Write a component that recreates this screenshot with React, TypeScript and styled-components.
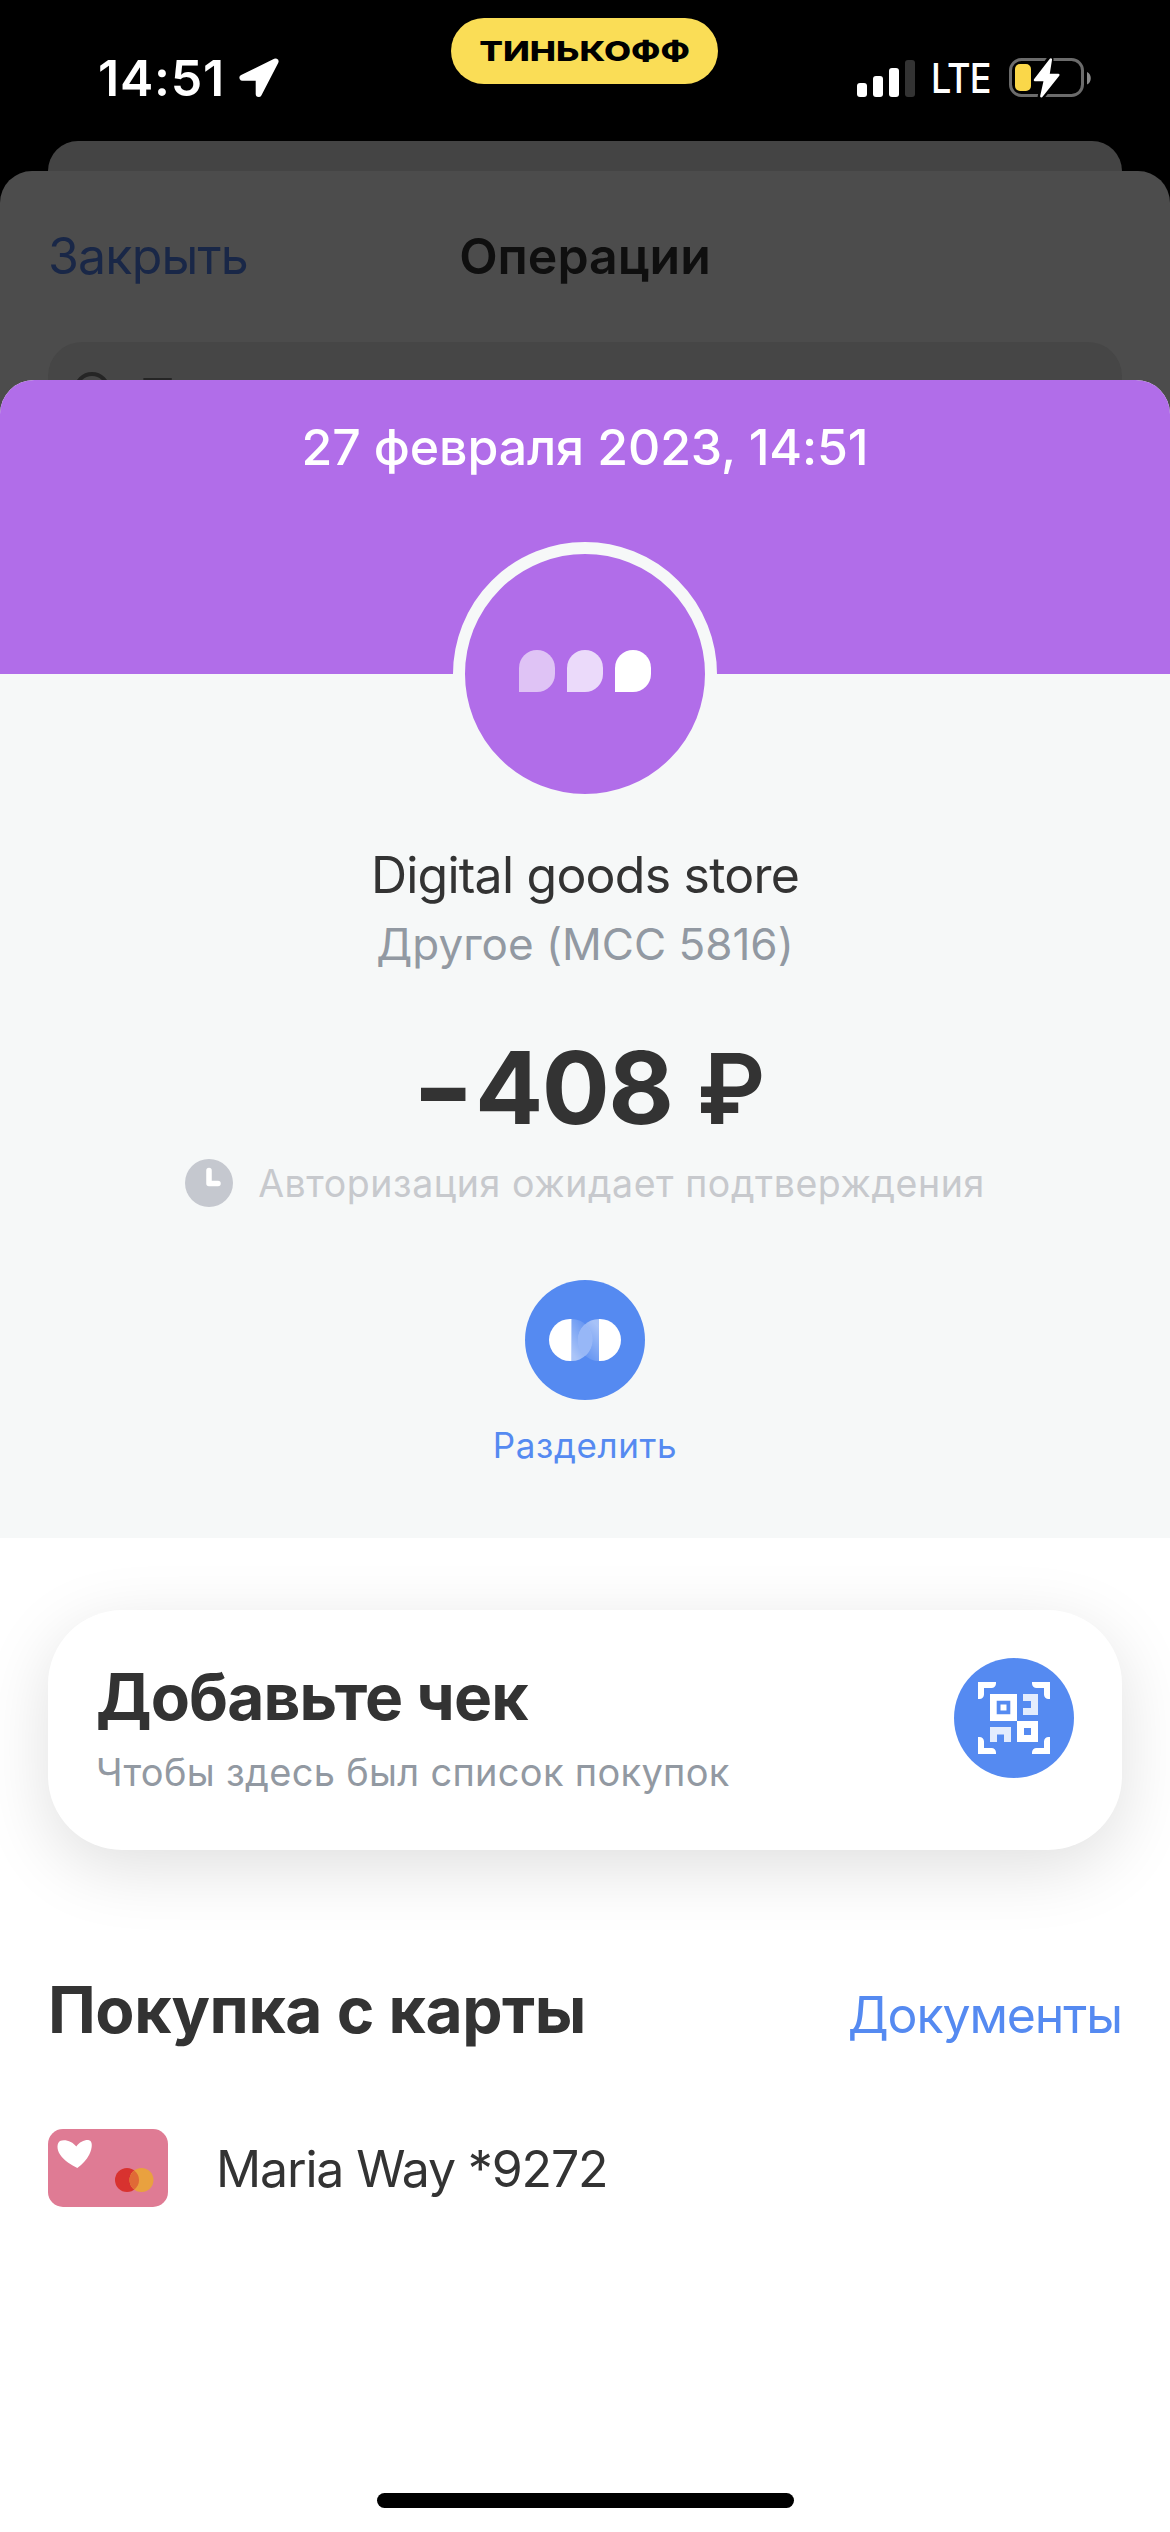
import React from "react";
import styled, { createGlobalStyle } from "styled-components";

const GlobalStyle = createGlobalStyle`
  * { box-sizing: border-box; }
  body {
    margin: 0;
    background: #000;
    font-family: Inter, "Noto Sans", sans-serif;
    -webkit-font-smoothing: antialiased;
  }
`;

const Screen = styled.div`
  width: 1170px;
  height: 2532px;
  background: #000;
  display: flex;
  flex-direction: column;
  overflow: hidden;
`;

const Label = styled.span<{
  $size: number;
  $line: number;
  $color: string;
  $weight?: number;
  $track?: number;
}>`
  display: block;
  margin: 0;
  white-space: nowrap;
  font-size: ${(p) => p.$size}px;
  line-height: ${(p) => p.$line}px;
  color: ${(p) => p.$color};
  font-weight: ${(p) => p.$weight ?? 400};
  letter-spacing: ${(p) => p.$track ?? 0}px;
`;

/* Status bar */

const StatusBar = styled.header`
  height: 141px;
  flex: none;
  display: grid;
  grid-template-columns: 451px 267px 1fr;
`;

const StatusLeft = styled.div`
  display: flex;
  align-items: center;
  gap: 11px;
  height: 60px;
  margin-top: 48px;
  padding-left: 98px;
`;

const BrandPill = styled.div`
  height: 66px;
  margin-top: 18px;
  border-radius: 33px;
  background: #fadd56;
  display: flex;
  align-items: center;
  justify-content: center;
`;

const BrandName = styled(Label)`
  transform: scaleX(1.275);
`;

const StatusRight = styled.div`
  display: flex;
  align-items: center;
  justify-content: flex-end;
  height: 60px;
  margin-top: 48px;
  padding-right: 78px;
`;

const Signal = styled.div`
  display: flex;
  align-items: flex-end;
  gap: 6px;
  height: 37px;
  margin-right: 16px;
`;

const SignalBar = styled.i<{ $height: number; $off?: boolean }>`
  width: 10px;
  height: ${(p) => p.$height}px;
  border-radius: 3px;
  background: ${(p) => (p.$off ? "#333" : "#fff")};
`;

const Network = styled(Label)`
  width: 64px;
  margin-right: 14px;
  transform: scaleX(0.88);
  transform-origin: left;
`;

/* Sheets underneath */

const BackSheet = styled.div`
  flex: none;
  height: 30px;
  margin: 0 48px;
  border-radius: 30px 30px 0 0;
  background: #444;
`;

const OperationsSheet = styled.section`
  flex: none;
  height: 249px;
  border-radius: 32px 32px 0 0;
  background: #4c4c4c;
`;

const NavBar = styled.div`
  height: 171px;
  padding: 0 48px 2px;
  display: grid;
  grid-template-columns: 1fr auto 1fr;
  align-items: center;
`;

const SearchField = styled.div`
  height: 78px;
  margin: 0 48px;
  padding: 25px 0 0 26px;
  border-radius: 34px;
  background: #464646;
  display: flex;
  gap: 22px;
`;

/* Operation details */

const Details = styled.main`
  position: relative;
  flex: 1;
  margin-top: -40px;
  border-radius: 34px 34px 0 0;
  background: #fff;
  overflow: hidden;
  display: flex;
  flex-direction: column;
`;

const Banner = styled.div`
  flex: none;
  height: 294px;
  padding-top: 37px;
  background: #b16de9;
  display: flex;
  justify-content: center;
`;

const Summary = styled.section`
  flex: none;
  height: 864px;
  background: #f6f8f8;
  display: flex;
  flex-direction: column;
  align-items: center;
`;

const Avatar = styled.div`
  width: 264px;
  height: 264px;
  margin: -132px 0 39px;
  flex: none;
  border: 12px solid #f6f8f8;
  border-radius: 50%;
  background: #b16de9;
  display: flex;
  justify-content: center;
  gap: 12px;
  padding-top: 96px;
`;

const Drop = styled.i<{ $color: string }>`
  width: 36px;
  height: 42px;
  border-radius: 18px 18px 18px 0;
  background: ${(p) => p.$color};
`;

const Category = styled(Label)`
  margin-top: 9px;
`;

const Amount = styled(Label)`
  height: 120px;
  margin: 53px 0 12px;
  padding-left: 9px;
  word-spacing: -3px;
`;

const Minus = styled.span`
  display: inline-block;
  line-height: 100px;
  margin-right: 11px;
  font-weight: 800;
  transform: scaleX(0.88);
  transform-origin: right;
`;

const Currency = styled.span`
  display: inline-block;
  line-height: 100px;
  font-weight: 600;
  transform: scale(0.93, 0.97);
  transform-origin: 100% 86%;
`;

const Status = styled.div`
  display: flex;
  align-items: center;
  gap: 25px;
  height: 48px;
`;

const StatusText = styled(Label)`
  padding-top: 2px;
`;

const SplitAction = styled.button`
  margin: 73px 0 0;
  padding: 0;
  border: 0;
  background: none;
  font: inherit;
  display: flex;
  flex-direction: column;
  align-items: center;
  gap: 23px;
`;

const ReceiptCard = styled.section`
  flex: none;
  height: 240px;
  margin: 72px 48px 0;
  padding: 48px 48px 0;
  border-radius: 74px;
  background: #fff;
  box-shadow: 0 18px 68px rgba(0, 0, 0, 0.125);
  display: flex;
  justify-content: space-between;
`;

const ReceiptText = styled.div`
  display: flex;
  flex-direction: column;
  gap: 12px;
`;

const SectionHead = styled.div`
  margin: 122px 48px 0;
  display: flex;
  justify-content: space-between;
  align-items: baseline;
`;

const CardRow = styled.div`
  margin: 81px 48px 0;
  height: 78px;
  display: flex;
  align-items: center;
  gap: 48px;
`;

const CardName = styled(Label)`
  padding-top: 2px;
`;

const HomeBar = styled.div`
  width: 417px;
  height: 15px;
  margin: auto auto 24px;
  border-radius: 8px;
  background: #000;
`;

const LocationIcon = () => (
  <svg width="44" height="42" viewBox="0 0 44 42">
    <path
      d="M39.500 4.500 6.500 20.800h16.200V37z"
      fill="#fff"
      stroke="#fff"
      strokeWidth="6"
      strokeLinejoin="round"
    />
  </svg>
);

const BatteryIcon = () => (
  <svg width="83" height="42" viewBox="0 0 83 42">
    <rect x="1.5" y="2.500" width="72" height="36" rx="11" fill="none" stroke="#6b6b6b" strokeWidth="3" />
    <path d="M78 15c5 2 5 10.500 0 12.500z" fill="#8a8a8a" />
    <rect x="6" y="7" width="16" height="27" rx="5" fill="#fad749" />
    <path
      d="M41 2.500 25.800 23.500h9.600L32.200 39.500 49.300 18h-10z"
      fill="#fff"
      stroke="#000"
      strokeWidth="7"
      strokeLinejoin="round"
    />
    <path
      d="M41.800 2.500 26 23h10L32.400 39.200 49.300 18h-10z"
      fill="#fff"
      stroke="#fff"
      strokeWidth="2.500"
      strokeLinejoin="round"
    />
  </svg>
);

const SearchIcon = () => (
  <svg width="43" height="43" viewBox="0 0 43 43">
    <circle cx="18" cy="23" r="16" fill="none" stroke="#252525" strokeWidth="4" />
    <path d="m30 34 9 9" stroke="#252525" strokeWidth="4" />
  </svg>
);

const ClockIcon = () => (
  <svg width="48" height="48" viewBox="0 0 48 48">
    <circle cx="24" cy="24" r="24" fill="#c5c8cf" />
    <path d="M24 11.500v13h9" fill="none" stroke="#fff" strokeWidth="5.500" strokeLinecap="round" strokeLinejoin="round" />
  </svg>
);

const SplitIcon = () => (
  <svg width="120" height="120" viewBox="0 0 120 120">
    <defs>
      <linearGradient id="split-left" x1="1" y1="0" x2="0.3" y2="1">
        <stop offset="0.2" stopColor="#fff" stopOpacity="0.08" />
        <stop offset="1" stopColor="#fff" stopOpacity="0.5" />
      </linearGradient>
      <linearGradient id="split-right" x1="0.6" y1="0" x2="0.1" y2="1">
        <stop offset="0" stopColor="#fff" stopOpacity="0.48" />
        <stop offset="0.9" stopColor="#fff" stopOpacity="0.06" />
      </linearGradient>
    </defs>
    <circle cx="60" cy="60" r="60" fill="#558af1" />
    <path d="M46.500 39a21 21 0 0 1 0 42z" fill="url(#split-left)" />
    <path d="M74 39a21 21 0 0 0 0 42z" fill="url(#split-right)" />
    <path d="M60 44.200a21 21 0 0 1 0 31.600a21 21 0 0 1 0-31.600z" fill="#97b7f7" />
    <path d="M46.500 39H45a21 21 0 0 0 0 42h1.500z" fill="#fff" />
    <path d="M74 39h1a21 21 0 0 1 0 42h-1z" fill="#fff" />
  </svg>
);

const QrIcon = () => (
  <svg width="120" height="120" viewBox="0 0 120 120">
    <circle cx="60" cy="60" r="60" fill="#558af1" />
    <g fill="#fff">
      <path d="M24 24h18v1.500a4.500 4.500 0 0 1-4.500 4.500H30v6.500a4.500 4.500 0 0 1-4.500 4.500H24z" />
      <path d="M96 24H78v1.500a4.500 4.500 0 0 0 4.500 4.500H90v6.500a4.500 4.500 0 0 0 4.500 4.500H96z" />
      <path d="M24 96h18v-1.500a4.500 4.500 0 0 0-4.500-4.500H30v-6.500a4.500 4.500 0 0 0-4.500-4.500H24z" />
      <path d="M96 96H78v-1.500a4.500 4.500 0 0 1 4.500-4.500H90v-6.500a4.500 4.500 0 0 1 4.500-4.500H96z" />
      <path fillRule="evenodd" d="M36 36h27v27H36zM42.700 42.700v13.600h13.600V42.700z" />
      <path d="M46.500 46.500h6v6h-6z" />
      <path fillRule="evenodd" d="M63 63h21v21H63zM70 70v7h7v-7z" />
    </g>
    <g fill="#e3ecfd">
      <path d="M69 36h15v21H69v-7h8v-7h-8z" />
      <path d="M36 69h21v15h-7v-7.500h-7V84h-7z" />
    </g>
  </svg>
);

const BankCardIcon = () => (
  <svg width="120" height="78" viewBox="0 0 120 78">
    <rect width="120" height="78" rx="15" fill="#df7b94" />
    <path
      d="M28.300 17.500C31.500 12.800 37 10.600 41 11.200C44.600 11.800 44.800 18.500 41.300 25.500C38.600 31 34 35.500 29.300 39C23.500 36.200 16 31.500 12 25.500C8.600 20.300 8.800 13.800 12 12C17 9.800 24.500 12.500 28.300 17.500Z"
      fill="#fff"
    />
    <circle cx="79" cy="51" r="12" fill="#d8322f" />
    <circle cx="93.500" cy="51" r="12" fill="#e9a13f" />
    <path d="M86.250 41.400a12 12 0 0 1 0 19.200a12 12 0 0 1 0-19.200z" fill="#e06a36" />
  </svg>
);

export default function App() {
  return (
    <Screen>
      <GlobalStyle />
      <StatusBar>
        <StatusLeft>
          <Label as="time" $size={50} $line={60} $color="#fff" $weight={600} $track={0.8}>
            14:51
          </Label>
          <LocationIcon />
        </StatusLeft>
        <BrandPill>
          <BrandName $size={27.5} $line={34} $color="#000" $weight={800}>
            ТИНЬКОФФ
          </BrandName>
        </BrandPill>
        <StatusRight>
          <Signal>
            <SignalBar $height={14} />
            <SignalBar $height={21} />
            <SignalBar $height={29} />
            <SignalBar $height={37} $off />
          </Signal>
          <Network $size={41} $line={60} $color="#fff" $weight={500} $track={-1}>
            LTE
          </Network>
          <BatteryIcon />
        </StatusRight>
      </StatusBar>

      <BackSheet />
      <OperationsSheet>
        <NavBar>
          <Label $size={50} $line={60} $color="#192747" $track={-0.8}>
            Закрыть
          </Label>
          <Label as="h2" $size={50} $line={60} $color="#0f0f0f" $weight={600}>
            Операции
          </Label>
        </NavBar>
        <SearchField>
          <SearchIcon />
          <Label $size={50} $line={60} $color="#252525" $track={-0.8}>
            Поиск
          </Label>
        </SearchField>
      </OperationsSheet>

      <Details>
        <Banner>
          <Label as="time" $size={50} $line={60} $color="#fff" $weight={500} $track={-0.12}>
            27 февраля 2023, 14:51
          </Label>
        </Banner>

        <Summary>
          <Avatar>
            <Drop $color="#dfc3f5" />
            <Drop $color="#ebdafa" />
            <Drop $color="#fff" />
          </Avatar>
          <Label $size={50} $line={60} $color="#333" $track={-0.78}>
            Digital goods store
          </Label>
          <Category $size={44} $line={60} $color="#9299a2">
            Другое (MCC 5816)
          </Category>
          <Amount $size={101} $line={120} $color="#333" $weight={700} $track={-1.5}>
            <Minus>–</Minus>408 <Currency>₽</Currency>
          </Amount>
          <Status>
            <ClockIcon />
            <StatusText $size={37.5} $line={48} $color="#c7c9cd" $track={0.57}>
              Авторизация ожидает подтверждения
            </StatusText>
          </Status>
          <SplitAction>
            <SplitIcon />
            <Label $size={35} $line={44} $color="#558af1" $track={0.6}>
              Разделить
            </Label>
          </SplitAction>
        </Summary>

        <ReceiptCard>
          <ReceiptText>
            <Label $size={64} $line={78} $color="#333" $weight={700} $track={-0.9}>
              Добавьте чек
            </Label>
            <Label $size={38} $line={48} $color="#9299a2" $track={0.3}>
              Чтобы здесь был список покупок
            </Label>
          </ReceiptText>
          <QrIcon />
        </ReceiptCard>

        <SectionHead>
          <Label $size={64} $line={76} $color="#333" $weight={700} $track={-0.45}>
            Покупка с карты
          </Label>
          <Label $size={50} $line={60} $color="#558af1" $track={-1.1}>
            Документы
          </Label>
        </SectionHead>
        <CardRow>
          <BankCardIcon />
          <CardName $size={50} $line={60} $color="#333" $track={-1.15}>
            Maria Way *9272
          </CardName>
        </CardRow>

        <HomeBar />
      </Details>
    </Screen>
  );
}
